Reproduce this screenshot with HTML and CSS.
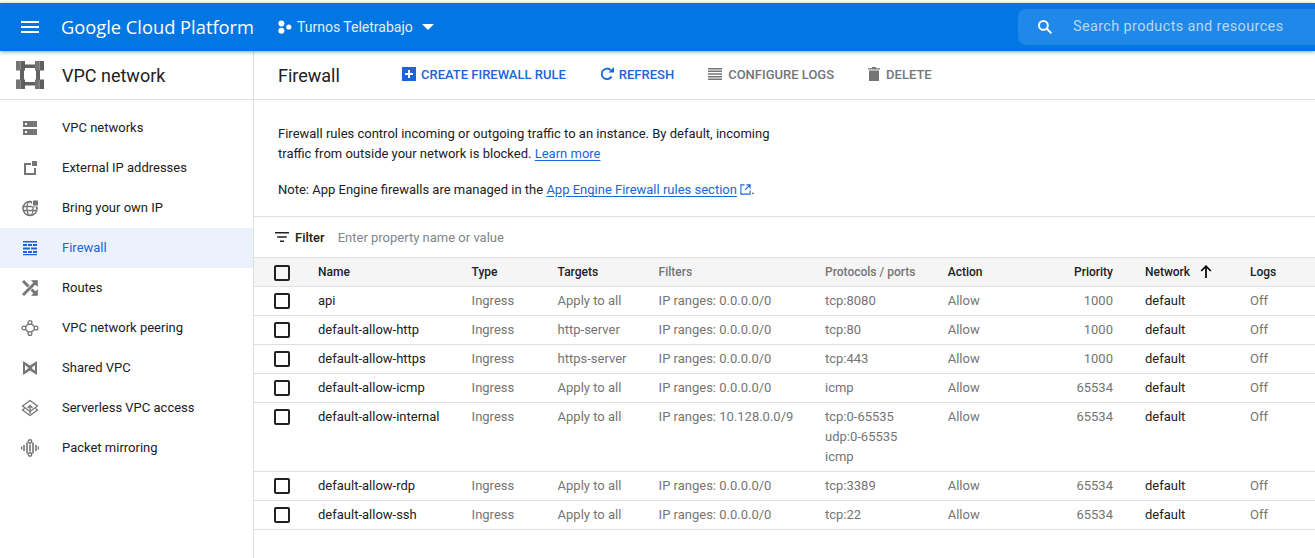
FILE: index.html
```html
<!DOCTYPE html>
<html>
    <head>
        <title>Firewall - VPC network</title>
        <link rel="stylesheet" href="styles.css">
    </head>
    <body>
        <header class="topbar">
            <svg class="menu-icon" width="18" height="12" viewBox="0 0 18 12"><path d="M0 0h18v2H0zM0 5h18v2H0zM0 10h18v2H0z" fill="#fff"/></svg>
            <span class="brand">Google Cloud Platform</span>
            <svg class="project-icon" width="14" height="14" viewBox="0 0 14 14"><circle cx="3.4" cy="3.4" r="3" fill="#fff"/><circle cx="3.4" cy="10.8" r="3" fill="#fff"/><circle cx="10.8" cy="7" r="2.6" fill="#fff"/></svg>
            <span class="project-name">Turnos Teletrabajo</span>
            <svg class="caret" width="12" height="6" viewBox="0 0 12 6"><path d="M0 0h12L6 6z" fill="#fff"/></svg>
            <div class="search">
                <svg width="16" height="16" viewBox="0 0 16 16"><circle cx="6.4" cy="6.4" r="4.4" fill="none" stroke="#fff" stroke-width="2"/><path d="M9.8 9.8L14.4 14.4" stroke="#fff" stroke-width="2"/></svg>
                <span class="search-text">Search products and resources</span>
            </div>
        </header>

        <div class="layout">
            <nav class="sidebar">
                <div class="sidebar-head">
                    <svg width="28" height="28" viewBox="0 0 28 28">
                        <path d="M4 9h4v10H4zM20 9h4v10h-4zM9 3.500h10v3.500H9zM9 21h10v3.500H9z" fill="#616161"/>
                        <path d="M0 0h4.500v9.500H0zM19 0h4.500v9.500H19zM0 18.500h4.500V28H0zM19 18.500h4.500V28H19z" fill="#757575"/>
                        <path d="M4.500 0H9v9.500H4.500zM23.500 0H28v9.500h-4.500zM4.500 18.500H9V28H4.500zM23.500 18.500H28V28h-4.500z" fill="#5f5f5f"/>
                    </svg>
                    <span>VPC network</span>
                </div>
                <ul class="nav-list">
                    <li class="nav-item">
                        <svg width="18" height="18" viewBox="0 0 18 18"><path fill="#757575" fill-rule="evenodd" d="M2 2h14v6H2zM4 4v2h2V4zM2 10h14v6H2zM4 12v2h2v-2z"/></svg>
                        <span>VPC networks</span>
                    </li>
                    <li class="nav-item">
                        <svg width="18" height="18" viewBox="0 0 18 18"><path fill="#757575" d="M3 4h7v2H5v8h8V9h2v7H3z"/><path fill="#757575" d="M11 2h5v5h-5z"/></svg>
                        <span>External IP addresses</span>
                    </li>
                    <li class="nav-item">
                        <svg width="18" height="18" viewBox="0 0 18 18"><circle cx="9" cy="9.5" r="7" fill="none" stroke="#757575" stroke-width="1.6"/><ellipse cx="9" cy="9.5" rx="3" ry="7" fill="none" stroke="#757575" stroke-width="1.3"/><path d="M2 7.5h14M2 11.5h14" stroke="#757575" stroke-width="1.3"/><path fill="#757575" stroke="#fff" d="M11.5 1h6v6h-6z"/></svg>
                        <span>Bring your own IP</span>
                    </li>
                    <li class="nav-item nav-active">
                        <svg width="18" height="18" viewBox="0 0 18 18"><path fill="#1a66d6" d="M2 2h14v1.600H2zM2 5h4v2H2zM7 5h4v2H7zM12 5h4v2h-4zM2 8.500h7v2H2zM10 8.500h6v2h-6zM2 12h4v2H2zM7 12h4v2H7zM12 12h4v2h-4zM2 15h14v1.200H2z"/></svg>
                        <span>Firewall</span>
                    </li>
                    <li class="nav-item">
                        <svg width="18" height="18" viewBox="2 2 20 20"><path fill="#757575" stroke="#757575" stroke-width="1.200" d="M10.590 9.170L5.410 4 4 5.410l5.170 5.170 1.420-1.410zM14.500 4l2.040 2.040L4 18.590 5.410 20 17.960 7.460 20 9.500V4h-5.500zm.33 9.410l-1.410 1.410 3.130 3.130L14.500 20H20v-5.500l-2.040 2.040-3.130-3.130z"/></svg>
                        <span>Routes</span>
                    </li>
                    <li class="nav-item">
                        <svg width="18" height="18" viewBox="0 0 18 18"><g fill="none" stroke="#757575" stroke-width="1.300"><circle cx="9" cy="3.500" r="1.900"/><circle cx="9" cy="14.500" r="1.900"/><circle cx="3" cy="9" r="1.900"/><circle cx="15" cy="9" r="1.900"/><path d="M7.700 4.800L4.300 7.700M10.300 4.800l3.400 2.900M4.300 10.300l3.400 2.900M13.700 10.300l-3.400 2.900"/></g></svg>
                        <span>VPC network peering</span>
                    </li>
                    <li class="nav-item">
                        <svg width="18" height="18" viewBox="0 0 18 18"><path fill="#757575" fill-rule="evenodd" d="M2 2l7 4.500L16 2v14l-7-4.500L2 16zM4 6v6l3.500-3zM14 6l-3.500 3 3.500 3z"/></svg>
                        <span>Shared VPC</span>
                    </li>
                    <li class="nav-item">
                        <svg width="18" height="18" viewBox="0 0 18 18"><g fill="none" stroke="#757575" stroke-width="1.300"><path d="M9 1.500L16.500 7 9 12.500 1.500 7zM3.500 9.500L1.500 11 9 16.500l7.500-5.500-2-1.500"/><path d="M9 15V7M6.500 9L9 6.500 11.500 9"/></g></svg>
                        <span>Serverless VPC access</span>
                    </li>
                    <li class="nav-item">
                        <svg width="18" height="18" viewBox="0 0 18 18"><g fill="none" stroke="#757575"><circle cx="9" cy="2.500" r="1.700" stroke-width="1.500"/><circle cx="9" cy="15.500" r="1.700" stroke-width="1.500"/><path stroke-width="1.600" d="M9 5.500v7M6 3.500v11M12 3.500v11M3 6v6M15 6v6M0.500 7.500v3M17.500 7.500v3"/></g></svg>
                        <span>Packet mirroring</span>
                    </li>
                </ul>
            </nav>

            <main class="content">
                <div class="toolbar">
                    <h1 class="page-title">Firewall</h1>
                    <div class="actions">
                        <span class="action action-blue">
                            <svg width="14" height="14" viewBox="0 0 14 14"><path fill="#1a66d6" fill-rule="evenodd" d="M0 0h14v14H0zM6 3v3H3v2h3v3h2V8h3V6H8V3z"/></svg>
                            CREATE FIREWALL RULE
                        </span>
                        <span class="action action-blue">
                            <svg width="14" height="14" viewBox="0 0 14 14"><path fill="none" stroke="#1a66d6" stroke-width="1.800" d="M11.600 9.500A5.300 5.300 0 1 1 10.700 3"/><path fill="#1a66d6" d="M14 0v5.600H8.400z"/></svg>
                            REFRESH
                        </span>
                        <span class="action action-grey">
                            <svg width="14" height="12" viewBox="0 0 14 12"><path fill="#757575" d="M0 0h14v1.400H0zM0 2.600h14V4H0zM0 5.300h14v1.400H0zM0 8h14v1.400H0zM0 10.600h14V12H0z"/></svg>
                            CONFIGURE LOGS
                        </span>
                        <span class="action action-grey">
                            <svg width="12" height="14" viewBox="0 0 12 14"><path fill="#757575" d="M1 3.500h10V14H1zM0 1.200h3.500L4.500 0h3l1 1.200H12v1.300H0z"/></svg>
                            DELETE
                        </span>
                    </div>
                </div>

                <section class="intro">
                    <p>Firewall rules control incoming or outgoing traffic to an instance. By default, incoming<br>traffic from outside your network is blocked. <a href="#">Learn more</a></p>
                    <p class="note">Note: App Engine firewalls are managed in the <a href="#">App Engine Firewall rules section</a>
                        <svg class="ext-icon" width="11" height="11" viewBox="0 0 12 12"><path fill="none" stroke="#1a66d6" stroke-width="1.200" d="M5 1H1v10h10V7M7 1h4v4M11 1L5.500 6.500"/></svg>.</p>
                </section>

                <div class="filter-bar">
                    <svg width="14" height="10" viewBox="0 0 14 10"><path fill="#202124" d="M0 0h14v1.500H0zM2.200 4.200h9.600v1.500H2.200zM5 8.400h4V10H5z"/></svg>
                    <span class="filter-label">Filter</span>
                    <span class="filter-hint">Enter property name or value</span>
                </div>

                <table class="rules-table">
                    <colgroup>
                        <col class="col-check"><col class="col-name"><col class="col-type"><col class="col-targets"><col class="col-filters">
                        <col class="col-ports"><col class="col-action"><col class="col-priority"><col class="col-network"><col>
                    </colgroup>
                    <thead>
                        <tr>
                            <th><span class="checkbox"></span></th>
                            <th>Name</th>
                            <th>Type</th>
                            <th>Targets</th>
                            <th class="th-muted">Filters</th>
                            <th class="th-muted">Protocols / ports</th>
                            <th>Action</th>
                            <th class="num">Priority</th>
                            <th>Network <svg class="sort-icon" width="12" height="13" viewBox="0 0 12 13"><path fill="none" stroke="#000" stroke-width="1.700" d="M6 13V1.500M1.200 6L6 1.200 10.800 6"/></svg></th>
                            <th>Logs</th>
                        </tr>
                    </thead>
                    <tbody>
                        <tr>
                            <td><span class="checkbox"></span></td><td class="dark">api</td><td>Ingress</td><td>Apply to all</td><td>IP ranges: 0.0.0.0/0</td><td>tcp:8080</td><td>Allow</td><td class="num">1000</td><td class="dark">default</td><td>Off</td>
                        </tr>
                        <tr>
                            <td><span class="checkbox"></span></td><td class="dark">default-allow-http</td><td>Ingress</td><td>http-server</td><td>IP ranges: 0.0.0.0/0</td><td>tcp:80</td><td>Allow</td><td class="num">1000</td><td class="dark">default</td><td>Off</td>
                        </tr>
                        <tr>
                            <td><span class="checkbox"></span></td><td class="dark">default-allow-https</td><td>Ingress</td><td>https-server</td><td>IP ranges: 0.0.0.0/0</td><td>tcp:443</td><td>Allow</td><td class="num">1000</td><td class="dark">default</td><td>Off</td>
                        </tr>
                        <tr>
                            <td><span class="checkbox"></span></td><td class="dark">default-allow-icmp</td><td>Ingress</td><td>Apply to all</td><td>IP ranges: 0.0.0.0/0</td><td>icmp</td><td>Allow</td><td class="num">65534</td><td class="dark">default</td><td>Off</td>
                        </tr>
                        <tr>
                            <td><span class="checkbox"></span></td><td class="dark">default-allow-internal</td><td>Ingress</td><td>Apply to all</td><td>IP ranges: 10.128.0.0/9</td><td>tcp:0-65535<br>udp:0-65535<br>icmp</td><td>Allow</td><td class="num">65534</td><td class="dark">default</td><td>Off</td>
                        </tr>
                        <tr>
                            <td><span class="checkbox"></span></td><td class="dark">default-allow-rdp</td><td>Ingress</td><td>Apply to all</td><td>IP ranges: 0.0.0.0/0</td><td>tcp:3389</td><td>Allow</td><td class="num">65534</td><td class="dark">default</td><td>Off</td>
                        </tr>
                        <tr>
                            <td><span class="checkbox"></span></td><td class="dark">default-allow-ssh</td><td>Ingress</td><td>Apply to all</td><td>IP ranges: 0.0.0.0/0</td><td>tcp:22</td><td>Allow</td><td class="num">65534</td><td class="dark">default</td><td>Off</td>
                        </tr>
                    </tbody>
                </table>
            </main>
        </div>
    </body>
</html>
```

FILE: styles.css
```css
html, body {
    margin: 0;
    height: 100%;
    overflow: hidden;
}

body {
    padding-top: 3px;
    box-sizing: border-box;
    font-family: Roboto, sans-serif;
    font-size: 13px;
    color: #202124;
    background: #fff;
}

/* top blue bar */
.topbar {
    position: relative;
    z-index: 2;
    display: flex;
    align-items: center;
    height: 48px;
    background: #0277e4;
    box-shadow: 0 1px 4px rgba(0, 0, 0, 0.4);
    color: #fff;
}

.menu-icon {
    margin-left: 21px;
}

.brand {
    margin-left: 22px;
    margin-bottom: 2px;
    width: 194px;
    font-family: "Open Sans", sans-serif;
    font-size: 18.300px;
    white-space: nowrap;
}

.project-icon {
    margin-left: 23px;
}

.project-name {
    margin-left: 5px;
    font-size: 14px;
    color: #e3eefb;
}

.caret {
    margin-left: 9px;
}

.search {
    display: flex;
    align-items: center;
    margin-left: auto;
    width: 297px;
    height: 36px;
    border-radius: 8px 0 0 8px;
    background: #1f88e8;
}

.search svg {
    margin-left: 19px;
}

.search-text {
    margin-left: 20px;
    margin-bottom: 2px;
    font-size: 14.500px;
    letter-spacing: 0.35px;
    color: #b5d6f6;
}

.layout {
    display: flex;
    height: 507px;
}

/* left nav */
.sidebar {
    width: 253px;
    flex-shrink: 0;
    border-right: 1px solid #e0e0e0;
}

.sidebar-head {
    display: flex;
    align-items: center;
    gap: 18px;
    height: 48px;
    padding-left: 16px;
    border-bottom: 1px solid #e0e0e0;
    font-size: 18px;
    color: #202124;
}

.nav-list {
    list-style: none;
    margin: 8px 0 0;
    padding: 0;
}

.nav-item {
    display: flex;
    align-items: center;
    gap: 23px;
    height: 40px;
    padding-left: 21px;
}

.nav-item span {
    margin-bottom: 2px;
}

.nav-active {
    background: #ebf2fc;
    color: #1a66d6;
}

/* main area */
.content {
    flex: 1;
    min-width: 0;
}

.toolbar {
    display: flex;
    align-items: center;
    height: 48px;
    padding-left: 24px;
    border-bottom: 1px solid #e0e0e0;
}

.page-title {
    width: 124px;
    margin: 0;
    font-size: 18px;
    font-weight: 400;
}

.actions {
    display: flex;
    gap: 34px;
    margin-bottom: 2px;
}

.action {
    display: flex;
    align-items: center;
    gap: 5px;
    font-size: 13px;
    font-weight: 500;
}

.action-blue {
    color: #1a66d6;
}

.action-grey {
    gap: 6px;
    color: #757575;
}

.intro {
    padding: 24px 0 0 24px;
    box-sizing: border-box;
    border-bottom: 1px solid #e0e0e0;
    height: 117px;
    line-height: 20px;
}

.intro p {
    margin: 0;
}

.intro .note {
    margin-top: 16px;
}

.intro a {
    color: #1a66d6;
    text-decoration: underline;
    text-underline-offset: 2px;
}

.ext-icon {
    vertical-align: -1px;
}

.filter-bar {
    display: flex;
    align-items: center;
    height: 40px;
    padding-left: 21px;
}

.filter-label {
    margin-left: 6px;
    font-weight: 500;
}

.filter-hint {
    margin-left: 13px;
    color: #80868b;
}

/* rules table */
.rules-table {
    width: 100%;
    table-layout: fixed;
    border-collapse: collapse;
    border-top: 1px solid #e0e0e0;
}

.rules-table th,
.rules-table td {
    padding: 0;
    text-align: left;
    line-height: 20px;
    border-bottom: 1px solid #e0e0e0;
    vertical-align: top;
}

.rules-table th {
    height: 29px;
    padding-top: 4px;
    box-sizing: border-box;
    background: #f5f5f5;
    font-size: 12px;
    font-weight: 500;
}

.rules-table td {
    height: 28px;
    padding-top: 4px;
    padding-bottom: 4px;
    box-sizing: border-box;
    color: #757575;
}

.rules-table .dark {
    color: #202124;
}

.rules-table .th-muted {
    color: #757575;
}

.rules-table .num {
    text-align: right;
    padding-right: 32px;
}

.col-check { width: 64px; }
.col-name { width: 153.600px; }
.col-type { width: 86px; }
.col-targets { width: 101px; }
.col-filters { width: 166.400px; }
.col-ports { width: 122.700px; }
.col-action { width: 90.300px; }
.col-priority { width: 107px; }
.col-network { width: 105px; }

.checkbox {
    display: block;
    width: 12px;
    height: 12px;
    margin: 2px 0 0 20px;
    border: 2px solid #202124;
    border-radius: 2px;
}

th .checkbox {
    margin-top: 3px;
}

.sort-icon {
    vertical-align: -2px;
    margin-left: 7px;
}
```
